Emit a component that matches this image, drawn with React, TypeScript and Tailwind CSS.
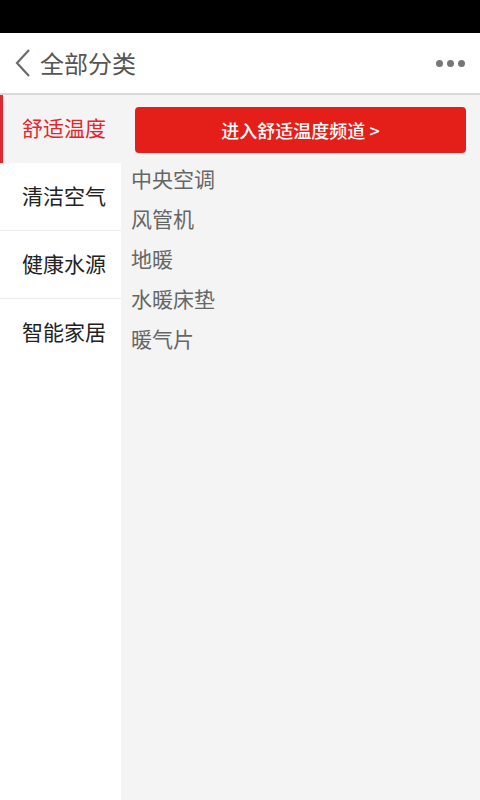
import { useState } from 'react';

const categories = ['舒适温度', '清洁空气', '健康水源', '智能家居'];

const subItems: Record<string, string[]> = {
  舒适温度: ['中央空调', '风管机', '地暖', '水暖床垫', '暖气片'],
  清洁空气: [],
  健康水源: [],
  智能家居: [],
};

export default function App() {
  const [active, setActive] = useState(0);
  const current = categories[active];

  return (
    <div
      className="flex h-[800px] w-[480px] flex-col overflow-hidden bg-white"
      style={{ fontFamily: '"Noto Sans CJK SC", "Noto Sans", sans-serif' }}
    >
      <div className="h-[33px] shrink-0 bg-black" />

      <header className="flex h-[62px] shrink-0 items-center border-b-2 border-[#d9d9d9] bg-white">
        <svg width="20" height="30" viewBox="0 0 20 30" className="ml-[13px]">
          <path d="M16 2 L4 15 L16 28" fill="none" stroke="#6a6a6a" strokeWidth="2.2" />
        </svg>
        <h1 className="ml-[7px] text-[24px] leading-none text-[#555]">全部分类</h1>
        <div className="ml-auto mr-[15px] flex gap-[4px]">
          <span className="h-[7px] w-[7px] rounded-full bg-[#777]" />
          <span className="h-[7px] w-[7px] rounded-full bg-[#777]" />
          <span className="h-[7px] w-[7px] rounded-full bg-[#777]" />
        </div>
      </header>

      <div className="flex flex-1">
        <nav className="w-[121px] shrink-0 bg-white">
          {categories.map((name, i) => (
            <button
              key={name}
              type="button"
              onClick={() => setActive(i)}
              className={
                i === active
                  ? 'flex h-[68px] w-full items-center border-l-[3px] border-[#e0282e] bg-[#f4f4f4] pb-[3px] pl-[19px] text-[21px] text-[#e0282e]'
                  : i === categories.length - 1
                    ? 'flex h-[68px] w-full items-center pb-[2px] pl-[22px] text-[21px] text-[#222]'
                    : 'flex h-[68px] w-full items-center border-b border-[#ececec] pb-[2px] pl-[22px] text-[21px] text-[#222]'
              }
            >
              {name}
            </button>
          ))}
        </nav>

        <section className="flex-1 bg-[#f4f4f4] pt-[12px]">
          <div className="mx-[14px] flex h-[46px] items-center justify-center rounded-[4px] bg-[#e41f19] text-[18px] font-medium text-white">
            进入{current}频道 &gt;
          </div>
          <ul className="mt-[5px] pl-[10px]">
            {subItems[current].map((item) => (
              <li key={item} className="h-[40px] text-[21px] leading-[40px] text-[#666]">
                {item}
              </li>
            ))}
          </ul>
        </section>
      </div>
    </div>
  );
}
